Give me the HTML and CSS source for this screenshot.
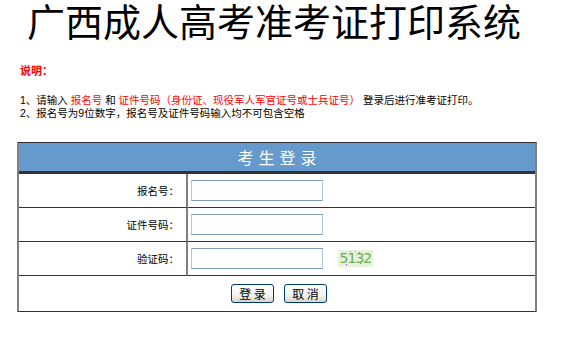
FILE: index.html
```html
<!DOCTYPE html>
<html lang="zh-CN">

<head>
    <meta charset="UTF-8">
    <meta name="viewport" content="width=device-width, initial-scale=1.0">
    <title>广西成人高考准考证打印系统</title>
    <link rel="stylesheet" href="styles.css">
</head>

<body>
    <div class="page">
        <h1 class="title">广西成人高考准考证打印系统</h1>

        <div class="notes">
            <p class="notes-head">说明：</p>
            <p class="note">1、请输入 <span class="hl">报名号</span> 和 <span class="hl">证件号码（身份证、现役军人军官证号或士兵证号）</span> 登录后进行准考证打印。</p>
            <p class="note">2、报名号为9位数字，报名号及证件号码输入均不可包含空格</p>
        </div>

        <form class="login">
            <table class="login-table">
                <colgroup>
                    <col class="col-label">
                    <col class="col-field">
                </colgroup>
                <tr>
                    <th colspan="2" class="login-head">考生登录</th>
                </tr>
                <tr>
                    <td class="label">报名号：</td>
                    <td class="field"><input type="text" class="box" autocomplete="off"></td>
                </tr>
                <tr>
                    <td class="label">证件号码：</td>
                    <td class="field"><input type="text" class="box" autocomplete="off"></td>
                </tr>
                <tr>
                    <td class="label">验证码：</td>
                    <td class="field">
                        <input type="text" class="box" autocomplete="off">
                        <span class="captcha">5132</span>
                    </td>
                </tr>
                <tr>
                    <td colspan="2" class="actions">
                        <div class="btns">
                            <button type="submit" class="btn">登&nbsp;录</button>
                            <button type="reset" class="btn">取&nbsp;消</button>
                        </div>
                    </td>
                </tr>
            </table>
        </form>
    </div>
</body>

</html>
```

FILE: styles.css
```css
* {
    margin: 0px;
    padding: 0px;
    box-sizing: border-box;
}

body {
    background-color: #ffffff;
    font-family: "Liberation Sans", "Noto Sans CJK SC", sans-serif;
    font-size: 10.5px;
    color: #000000;
}

.page {
    width: 580px;
}

.title {
    font-family: "Noto Sans CJK SC", serif;
    font-size: 38px;
    line-height: 40px;
    font-weight: normal;
    padding-left: 27px;
}

.notes {
    padding-left: 20px;
    margin-top: 25px;
}

.notes-head {
    color: #ff0000;
    font-weight: bold;
    font-size: 11px;
    line-height: 13px;
    margin-bottom: 16px;
}

.note {
    line-height: 13px;
    white-space: nowrap;
}

.hl {
    color: #ff0000;
}

.login {
    margin-top: 22px;
    margin-left: 17px;
}

.login-table {
    width: 520px;
    border-spacing: 0;
    border-collapse: separate;
    table-layout: fixed;
    border-top: 1px solid #333333;
    border-bottom: 1px solid #333333;
    border-left: 2px solid #808080;
    border-right: 2px solid #808080;
}

.col-label {
    width: 169px;
}

.login-head {
    height: 31px;
    background-color: #6699cc;
    border-bottom: 3px solid #333333;
    color: #ffffff;
    font-size: 16px;
    font-weight: normal;
    letter-spacing: 5px;
    padding-left: 5px;
    text-align: center;
    vertical-align: middle;
}

.label {
    height: 34px;
    border-right: 2px solid #808080;
    border-bottom: 1px solid #333333;
    text-align: right;
    padding-right: 7px;
    vertical-align: middle;
}

.field {
    height: 34px;
    border-bottom: 1px solid #333333;
    padding-left: 3px;
    vertical-align: middle;
}

.field .box,
.field .captcha {
    vertical-align: middle;
}

.box {
    width: 132px;
    height: 21px;
    border: 1px solid #7f9db9;
    border-left-color: #b3c7db;
    border-right-color: #b3c7db;
    font-size: 12px;
    padding: 0 3px;
    outline: none;
}

.captcha {
    display: inline-block;
    width: 35px;
    height: 17px;
    margin-left: 12px;
    background-color: #e6f2dc;
    color: #66b050;
    font-family: "DejaVu Sans", sans-serif;
    font-size: 14px;
    line-height: 17px;
    text-align: center;
    letter-spacing: -1px;
    position: relative;
}

.captcha::after {
    content: "";
    position: absolute;
    left: 12px;
    top: 1px;
    width: 1px;
    height: 1px;
    background: #d86ad0;
    box-shadow: 5px 0 0 #c9a040, 9px 1px 0 #d85050, -4px 13px 0 #a020c0, 10px 12px 0 #c040c0;
}

.actions {
    height: 35px;
    vertical-align: middle;
}

.btns {
    display: flex;
    justify-content: center;
    gap: 10px;
    padding-left: 4px;
}

.btn {
    width: 43px;
    height: 19px;
    border: 1px solid #003c74;
    border-radius: 3px;
    background: linear-gradient(#ffffff, #f4f3ee 60%, #d8d4c8);
    font-family: "Noto Sans CJK SC", sans-serif;
    font-size: 12px;
    line-height: 17px;
    color: #000000;
}
```
